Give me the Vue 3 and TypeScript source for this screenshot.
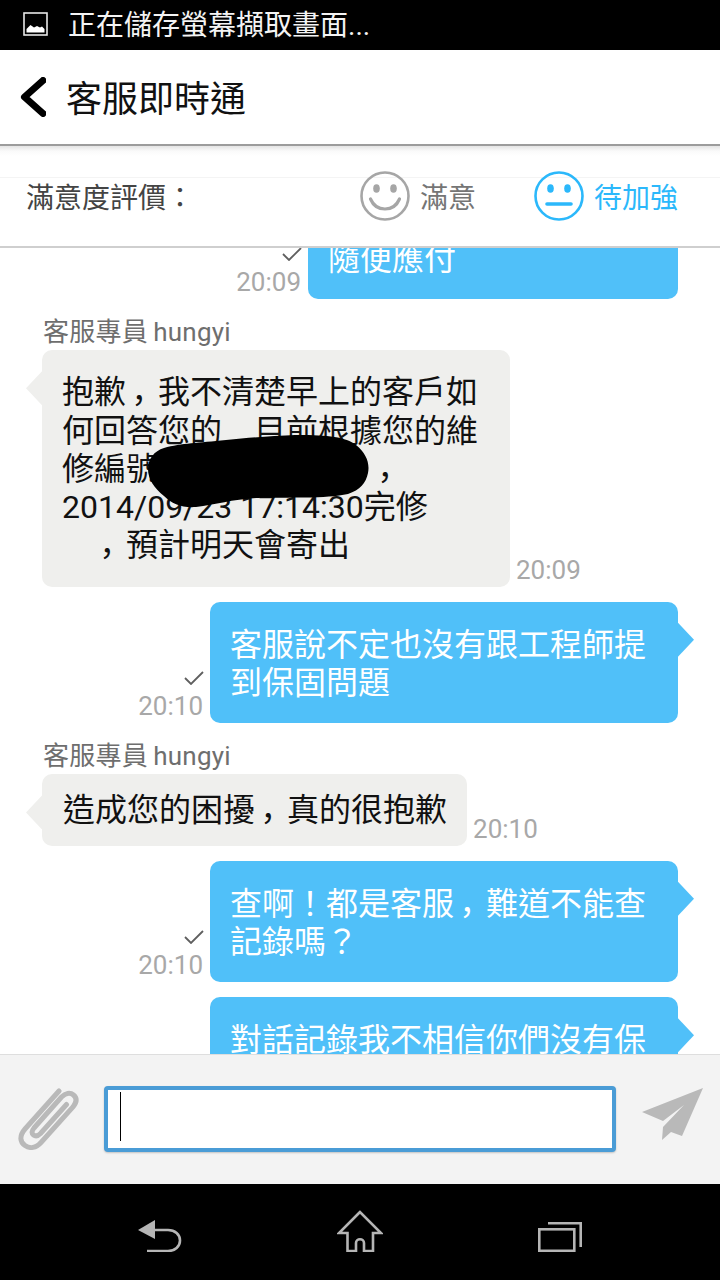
<script setup lang="ts">
interface Msg {
  side: 'in' | 'out'
  lines: string[]
  time?: string
  name?: string
  compact?: boolean
  short?: boolean
  open?: boolean
  blob?: boolean
}
const messages: Msg[] = [
  { side: 'out', lines: ['隨便應付'], time: '20:09', short: true },
  {
    side: 'in',
    name: '客服專員 hungyi',
    lines: ['抱歉，我不清楚早上的客戶如', '何回答您的　目前根據您的維', '修編號　　　　　　　，', '2014/09/23 17:14:30完修', '　，預計明天會寄出'],
    time: '20:09',
    blob: true
  },
  { side: 'out', lines: ['客服說不定也沒有跟工程師提', '到保固問題'], time: '20:10' },
  { side: 'in', name: '客服專員 hungyi', lines: ['造成您的困擾，真的很抱歉'], time: '20:10', compact: true },
  { side: 'out', lines: ['查啊！都是客服，難道不能查', '記錄嗎？'], time: '20:10' },
  { side: 'out', lines: ['對話記錄我不相信你們沒有保'], open: true }
]
</script>

<template>
  <div class="page">
    <div class="status">
      <svg class="status-icon" viewBox="0 0 25 24" width="25" height="24">
        <rect x="1" y="1" width="23" height="22" fill="none" stroke="#e8e8e8" stroke-width="1.6" />
        <path d="M3.500 20.500V17l4-4 3.500 2.500 3-1.500 3 1.500 2-1 2.500 2.500v3.500z" fill="#fff" />
      </svg>
      <span class="status-text">正在儲存螢幕擷取畫面...</span>
    </div>

    <header class="topbar">
      <svg class="back" viewBox="0 0 26 40" width="26" height="40">
        <path d="M23 3.500 4.500 20 23 36.500" fill="none" stroke="#000" stroke-width="7" stroke-linecap="round" stroke-linejoin="round" />
      </svg>
      <h1>客服即時通</h1>
    </header>

    <section class="rating">
      <span class="rating-label">滿意度評價：</span>
      <div class="option">
        <svg viewBox="0 0 50 50" width="50" height="50">
          <circle cx="25" cy="25" r="23.500" fill="none" stroke="#a6a6a6" stroke-width="2.600" />
          <ellipse cx="16.500" cy="17.500" rx="3.300" ry="4.300" fill="#a6a6a6" />
          <ellipse cx="33.500" cy="17.500" rx="3.300" ry="4.300" fill="#a6a6a6" />
          <path d="M10.500 28c3 7 8 10 14.500 10s11.500-3 14.500-10" fill="none" stroke="#a6a6a6" stroke-width="3.200" stroke-linecap="round" />
        </svg>
        <span>滿意</span>
      </div>
      <div class="option active">
        <svg viewBox="0 0 50 50" width="50" height="50">
          <circle cx="25" cy="25" r="23.500" fill="none" stroke="#2bb8fb" stroke-width="2.600" />
          <ellipse cx="16.500" cy="17.500" rx="3.300" ry="4.300" fill="#2bb8fb" />
          <ellipse cx="33.500" cy="17.500" rx="3.300" ry="4.300" fill="#2bb8fb" />
          <path d="M13 33h24" fill="none" stroke="#2bb8fb" stroke-width="3.600" stroke-linecap="round" />
        </svg>
        <span>待加強</span>
      </div>
    </section>

    <main class="chat">
      <div v-for="(m, i) in messages" :key="i" class="msg" :class="m.side">
        <div v-if="m.name" class="name">{{ m.name }}</div>
        <div class="row">
          <div v-if="m.side === 'out' && m.time" class="meta">
            <svg class="check" viewBox="0 0 20 14" width="20" height="14">
              <path d="M1 7l6 6L19 1" fill="none" stroke="#5f5f5f" stroke-width="1.800" />
            </svg>
            <span class="time">{{ m.time }}</span>
          </div>
          <div class="bubble" :class="{ compact: m.compact, short: m.short, open: m.open }">
            <div v-for="(l, j) in m.lines" :key="j" class="line">
              <template v-for="(seg, k) in l.split('，')" :key="k"><span v-if="k" class="comma">，</span>{{ seg }}</template>
            </div>
            <svg v-if="m.blob" class="blob" viewBox="0 0 222 74" width="222" height="74">
              <path d="M16 13C34 8 50 8 78 5c30-3 60-5 72-5 30 0 48 2 58 10 10 8 14 18 12 28-2 10-8 17-20 21-22 5-60 3-90 4-25 1-42 7-62 9-14 1-24-3-32-11C6 53 0 44 0 34c0-10 6-18 16-21z" fill="#000" />
            </svg>
          </div>
          <div v-if="m.side === 'in'" class="meta">
            <span class="time">{{ m.time }}</span>
          </div>
        </div>
      </div>
    </main>

    <footer class="composer">
      <svg class="clip" viewBox="0 0 62 62" width="62" height="62">
        <path d="M41 3 7 41c-6 7-5 13 0 16.500 5 3.500 11 2.500 16-3L55 19c4-5 4-9 .5-12-3.500-3-8-2-12 2L16 40c-2.500 3-2.500 5.500-.5 7 2 1.500 4.500 1 7-1.500l26-29" fill="none" stroke="#b9b9b9" stroke-width="5" stroke-linecap="round" />
      </svg>
      <div class="input"><i class="caret"></i></div>
      <svg class="send" viewBox="0 0 61 52" width="61" height="52">
        <path d="M61 0 0 24l21 9 21-16-21 22-1 13 9-8 11 4z" fill="#b9b9b9" />
      </svg>
    </footer>

    <nav class="navbar">
      <svg viewBox="0 0 44 32" width="44" height="32">
        <path d="M17 0 0 10l17 9z" fill="#b5b5b5" />
        <path d="M15 10h15c7 0 12 4.500 12 10.500S37 31 30 31H9" fill="none" stroke="#b5b5b5" stroke-width="2.600" />
      </svg>
      <svg viewBox="0 0 46 42" width="46" height="42">
        <path d="M23 2 2 23h8.500v18h8.500V33c0-5 8-5 8 0v8h9V23H44z" fill="none" stroke="#b5b5b5" stroke-width="2.600" />
      </svg>
      <svg viewBox="0 0 44 30" width="44" height="30">
        <rect x="1.300" y="7.300" width="35" height="21.500" fill="none" stroke="#b5b5b5" stroke-width="2.600" />
        <path d="M10 1.300h32.700V25" fill="none" stroke="#b5b5b5" stroke-width="2.600" />
      </svg>
    </nav>
  </div>
</template>

<style scoped>
.page {
  width: 720px;
  height: 1280px;
  display: flex;
  flex-direction: column;
  overflow: hidden;
  background: #fff;
  font-family: Roboto, "Noto Sans CJK TC", sans-serif;
}
.status {
  height: 50px;
  flex: none;
  box-sizing: border-box;
  padding: 0 0 2px 23px;
  background: #000;
  color: #f4f4f4;
  display: flex;
  align-items: center;
  gap: 20px;
  font-size: 28px;
}
.status-text {
  margin-bottom: 2px;
}
.topbar {
  height: 96px;
  flex: none;
  display: flex;
  align-items: center;
  gap: 20px;
  padding: 0 0 0 20px;
  border-bottom: 2px solid #9c9c9c;
  box-sizing: border-box;
  background: #fff;
}
.topbar h1 {
  margin: 0 0 2px;
  font-size: 36px;
  font-weight: 400;
  color: #111;
}
.rating {
  height: 102px;
  flex: none;
  box-sizing: border-box;
  display: flex;
  align-items: center;
  gap: 58px;
  padding: 0 42px 1px 26px;
  border-bottom: 2px solid #cfcfcf;
  background:
    linear-gradient(#e4e4e4 0, #fafafa 5px, rgba(255, 255, 255, 0) 10px),
    linear-gradient(#fff 31px, #f4f4f4 31px, #f4f4f4 32px, #fff 32px);
  font-size: 28px;
  color: #757575;
}
.rating-label {
  flex: 1;
  color: #444;
}
.option {
  display: flex;
  align-items: center;
  gap: 10px;
}
.option.active {
  color: #2bb8fb;
}
.chat {
  flex: 1;
  min-height: 0;
  overflow: hidden;
  padding: 0 42px;
  display: flex;
  flex-direction: column;
  gap: 15px;
}
.chat .msg:first-child {
  margin-top: -70px;
}
.msg {
  flex: none;
  display: flex;
  flex-direction: column;
}
.msg.out {
  align-items: flex-end;
}
.name {
  height: 36px;
  line-height: 37px;
  margin-left: 1px;
  font-size: 26px;
  letter-spacing: 0.25px;
  word-spacing: -1.500px;
  color: #6e6e6e;
}
.row {
  display: flex;
  align-items: flex-end;
  gap: 7px;
}
.in .row {
  gap: 6px;
}
.meta {
  display: flex;
  flex-direction: column;
  align-items: flex-end;
  margin-bottom: 2px;
}
.check {
  margin: 0 -1px 6px 0;
}
.time {
  height: 30px;
  line-height: 30px;
  font-size: 26px;
  color: #a8a8a8;
}
.bubble {
  position: relative;
  box-sizing: border-box;
  width: 468px;
  padding: 23px 20px 22px;
  border-radius: 10px;
  font-size: 32px;
  line-height: 38.300px;
  white-space: nowrap;
}
.out .bubble {
  background: #50c0f9;
  color: #fff;
  padding: 24px 20px 21px;
}
.in .bubble {
  background: #efefed;
  color: #111;
}
.comma {
  position: relative;
  top: 9px;
  left: -3px;
}
.line:nth-child(3) .comma {
  margin-left: -10px;
}
.bubble::after {
  content: "";
  position: absolute;
  top: 21px;
  width: 16px;
  height: 34px;
}
.out .bubble::after {
  right: -16px;
  background: #50c0f9;
  clip-path: polygon(0 0, 100% 50%, 0 100%);
}
.in .bubble::after {
  left: -16px;
  background: #efefed;
  clip-path: polygon(100% 0, 0 50%, 100% 100%);
}
.out .bubble.short {
  width: 370px;
  padding-top: 62px;
}
.out .bubble.open {
  padding-bottom: 60px;
}
.in .bubble.compact {
  width: auto;
  padding: 17px 20px 16px 21px;
}
.blob {
  position: absolute;
  left: 106px;
  top: 85px;
}
.composer {
  height: 130px;
  flex: none;
  box-sizing: border-box;
  display: flex;
  align-items: center;
  padding: 0 17px 0 18px;
  background: #f3f3f3;
  border-top: 1px solid #dedede;
}
.clip {
  flex: none;
  margin-top: -2px;
}
.input {
  flex: 1;
  height: 66px;
  margin: -2px 26px 0 24px;
  box-sizing: border-box;
  border: 4px solid #4a9cd6;
  border-radius: 4px;
  background: #fff;
  padding: 2px 12px;
  box-shadow: 0 1px 2px rgba(0, 0, 0, 0.2);
}
.caret {
  display: block;
  width: 1px;
  height: 49px;
  background: #000;
}
.send {
  flex: none;
  margin-top: -12px;
}
.navbar {
  height: 96px;
  flex: none;
  box-sizing: border-box;
  background: #000;
  padding: 26px 60px 28px;
  display: grid;
  grid-template-columns: repeat(3, 200px);
  justify-items: center;
  align-items: end;
}
</style>

<style>
html,
body {
  margin: 0;
  background: #fff;
}
</style>
